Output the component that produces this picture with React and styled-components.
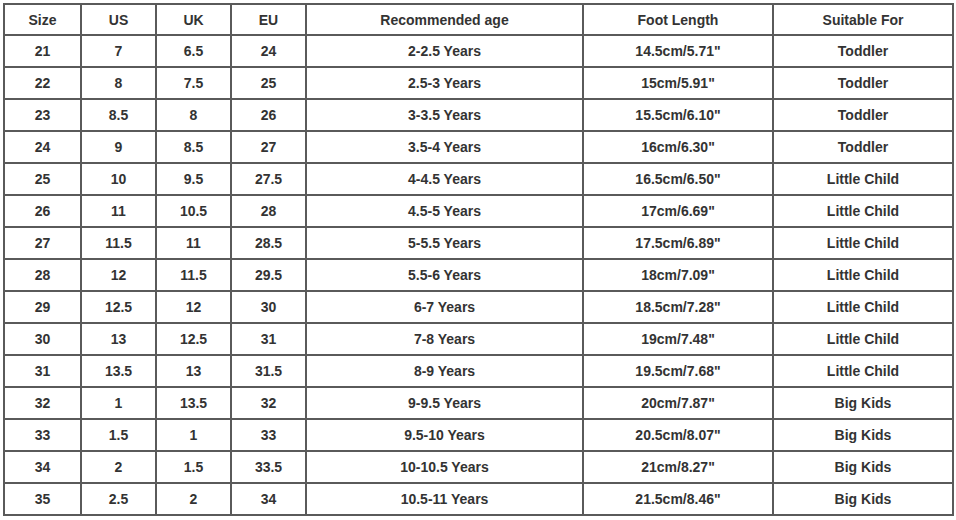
import React from 'react';
import styled, { createGlobalStyle } from 'styled-components';

const GlobalStyle = createGlobalStyle`
    body {
        margin: 0;
        background: #ffffff;
        font-family: "Liberation Sans", Arial, sans-serif;
    }
`;

const Page = styled.div`
    padding: 3px 4px 0 3px;
`;

const SizeTable = styled.table`
    border-collapse: collapse;
    table-layout: fixed;
    width: 949px;
    color: #333333;
    font-size: 14px;
    font-weight: bold;
`;

const Cell = styled.td`
    border: 2px solid #5a5a5a;
    height: ${(p) => (p.$head ? 29 : 30)}px;
    padding: 0;
    text-align: center;
    vertical-align: middle;
    white-space: nowrap;
`;

const widths = [77, 75, 75, 75, 277, 190, 180];
const headers = ['Size', 'US', 'UK', 'EU', 'Recommended age', 'Foot Length', 'Suitable For'];

const rows = [
    ['21', '7', '6.5', '24', '2-2.5 Years', '14.5cm/5.71"', 'Toddler'],
    ['22', '8', '7.5', '25', '2.5-3 Years', '15cm/5.91"', 'Toddler'],
    ['23', '8.5', '8', '26', '3-3.5 Years', '15.5cm/6.10"', 'Toddler'],
    ['24', '9', '8.5', '27', '3.5-4 Years', '16cm/6.30"', 'Toddler'],
    ['25', '10', '9.5', '27.5', '4-4.5 Years', '16.5cm/6.50"', 'Little Child'],
    ['26', '11', '10.5', '28', '4.5-5 Years', '17cm/6.69"', 'Little Child'],
    ['27', '11.5', '11', '28.5', '5-5.5 Years', '17.5cm/6.89"', 'Little Child'],
    ['28', '12', '11.5', '29.5', '5.5-6 Years', '18cm/7.09"', 'Little Child'],
    ['29', '12.5', '12', '30', '6-7 Years', '18.5cm/7.28"', 'Little Child'],
    ['30', '13', '12.5', '31', '7-8 Years', '19cm/7.48"', 'Little Child'],
    ['31', '13.5', '13', '31.5', '8-9 Years', '19.5cm/7.68"', 'Little Child'],
    ['32', '1', '13.5', '32', '9-9.5 Years', '20cm/7.87"', 'Big Kids'],
    ['33', '1.5', '1', '33', '9.5-10 Years', '20.5cm/8.07"', 'Big Kids'],
    ['34', '2', '1.5', '33.5', '10-10.5 Years', '21cm/8.27"', 'Big Kids'],
    ['35', '2.5', '2', '34', '10.5-11 Years', '21.5cm/8.46"', 'Big Kids'],
];

function App() {
    return (
        <Page>
            <GlobalStyle />
            <SizeTable>
                <colgroup>
                    {widths.map((w, i) => <col key={i} style={{ width: w }} />)}
                </colgroup>
                <thead>
                    <tr>
                        {headers.map((h) => <Cell as="th" $head key={h}>{h}</Cell>)}
                    </tr>
                </thead>
                <tbody>
                    {rows.map((r) => (
                        <tr key={r[0]}>
                            {r.map((v, i) => <Cell key={i}>{v}</Cell>)}
                        </tr>
                    ))}
                </tbody>
            </SizeTable>
        </Page>
    );
}

export default App;
